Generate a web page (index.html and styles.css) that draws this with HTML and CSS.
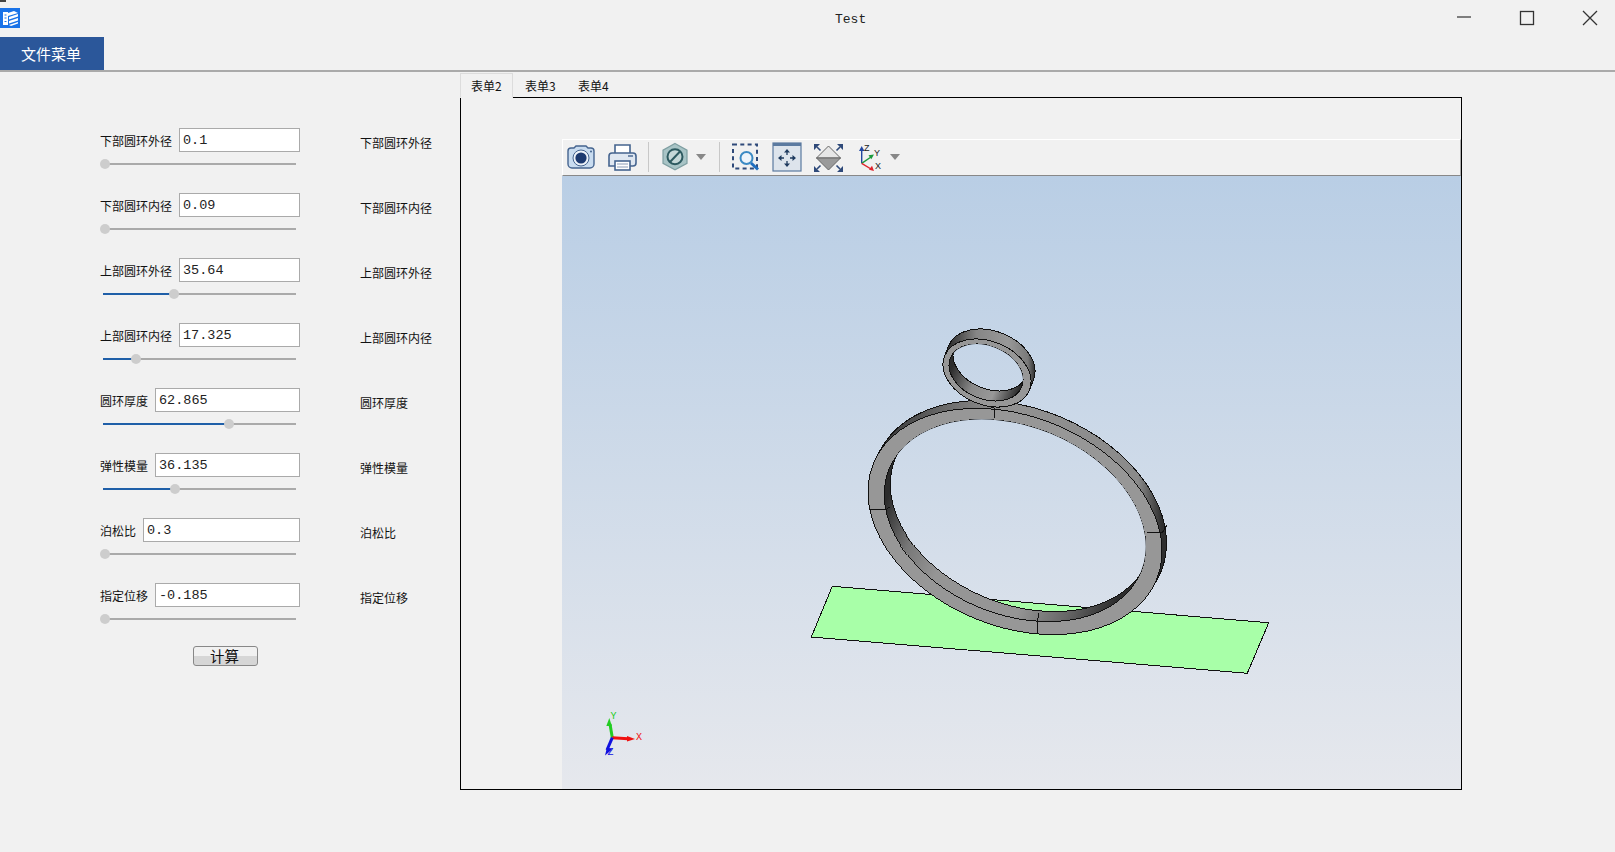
FILE: index.html
```html
<!DOCTYPE html>
<html lang="zh">
<head>
<meta charset="utf-8">
<title>Test</title>
<link rel="stylesheet" href="styles.css">
</head>
<body>
<header class="titlebar">
  <svg class="app-icon" viewBox="0 0 20 20"><rect width="20" height="20" fill="#1a73e8"/><path d="M3 4h5v13H3z" fill="#fff"/><path d="M4.500 7h2M4.500 10h2M4.500 13.500h2" stroke="#1a73e8" stroke-width="1.200"/><path d="M8 5l6-2 4 2-10 3zM9 9l9-3v2.500L9 11.500zM9 13l9-3v2.500L9 15.500zM9 17l9-3v1.500L11 18z" fill="#fff"/></svg>
  <div class="title">Test</div>
  <div class="winctl">
    <svg class="winbtn" viewBox="0 0 16 16"><path d="M1 7h14" stroke="#333" stroke-width="1.200" fill="none"/></svg>
    <svg class="winbtn" viewBox="0 0 16 16"><rect x="1.500" y="1.500" width="13" height="13" stroke="#333" stroke-width="1.300" fill="none"/></svg>
    <svg class="winbtn" viewBox="0 0 16 16"><path d="M1 1l14 14M15 1L1 15" stroke="#333" stroke-width="1.300" fill="none"/></svg>
  </div>
</header>
<nav class="menubar"><div class="menu-btn">文件菜单</div></nav>
<main class="main">
  <section class="params">
    <div class="param"><div class="field"><div class="line"><span class="lbl">下部圆环外径</span><div class="input">0.1</div></div><div class="slider"><div class="fill" style="width:0%"><i class="thumb"></i></div></div></div><div class="side">下部圆环外径</div></div>
    <div class="param"><div class="field"><div class="line"><span class="lbl">下部圆环内径</span><div class="input">0.09</div></div><div class="slider"><div class="fill" style="width:0%"><i class="thumb"></i></div></div></div><div class="side">下部圆环内径</div></div>
    <div class="param"><div class="field"><div class="line"><span class="lbl">上部圆环外径</span><div class="input">35.64</div></div><div class="slider"><div class="fill" style="width:35.64%"><i class="thumb"></i></div></div></div><div class="side">上部圆环外径</div></div>
    <div class="param"><div class="field"><div class="line"><span class="lbl">上部圆环内径</span><div class="input">17.325</div></div><div class="slider"><div class="fill" style="width:16.3%"><i class="thumb"></i></div></div></div><div class="side">上部圆环内径</div></div>
    <div class="param"><div class="field"><div class="line"><span class="lbl">圆环厚度</span><div class="input">62.865</div></div><div class="slider"><div class="fill" style="width:64.3%"><i class="thumb"></i></div></div></div><div class="side">圆环厚度</div></div>
    <div class="param"><div class="field"><div class="line"><span class="lbl">弹性模量</span><div class="input">36.135</div></div><div class="slider"><div class="fill" style="width:36.135%"><i class="thumb"></i></div></div></div><div class="side">弹性模量</div></div>
    <div class="param"><div class="field"><div class="line"><span class="lbl">泊松比</span><div class="input">0.3</div></div><div class="slider"><div class="fill" style="width:0%"><i class="thumb"></i></div></div></div><div class="side">泊松比</div></div>
    <div class="param"><div class="field"><div class="line"><span class="lbl">指定位移</span><div class="input">-0.185</div></div><div class="slider"><div class="fill" style="width:0%"><i class="thumb"></i></div></div></div><div class="side">指定位移</div></div>
    <div class="calc">计算</div>
  </section>
  <section class="workspace">
    <div class="tabs"><div class="tab active">表单2</div><div class="tab">表单3</div><div class="tab">表单4</div></div>
    <div class="pane">
      <div class="viewer">
        <div class="toolbar">
          <svg class="tool" viewBox="0 0 30 30"><path d="M2 9a3 3 0 0 1 3-3h3l2-2h10l2 2h3a3 3 0 0 1 3 3v13a4 4 0 0 1-4 4H6a4 4 0 0 1-4-4z" fill="#c9dcf0" stroke="#45648f" stroke-width="1.400"/><circle cx="15" cy="16" r="8" fill="#eef3f9" stroke="#45648f"/><circle cx="15" cy="16" r="5.600" fill="#1d3a70"/><circle cx="25" cy="9.500" r="1" fill="#45648f"/></svg>
          <svg class="tool tool-gap" viewBox="0 0 30 30"><path d="M8 11V3h15v8" fill="#fff" stroke="#45648f" stroke-width="1.600"/><path d="M2 14a3 3 0 0 1 3-3h21a3 3 0 0 1 3 3v7a3 3 0 0 1-3 3H2z" fill="#dfe7f1" stroke="#45648f" stroke-width="1.600"/><rect x="8" y="19" width="15" height="9" fill="#fff" stroke="#45648f" stroke-width="1.600"/><path d="M10 22h11M10 25h11" stroke="#8b9cb6"/><path d="M21 14h5" stroke="#45648f" stroke-width="1.400"/></svg>
          <span class="sep"></span>
          <svg class="tool" viewBox="0 0 30 30"><path d="M15 1.500l12 6.600v13.200l-12 6.600L3 21.300V8.100z" fill="#a8c4c6" stroke="#7f9fa2" stroke-width="1.200"/><circle cx="15" cy="14.700" r="7.500" fill="#c5d8d8" stroke="#2d5a60" stroke-width="2"/><path d="M10 20l10-10.500" stroke="#2d5a60" stroke-width="2"/></svg>
          <svg class="caret" viewBox="0 0 10 6"><path d="M0 0h10L5 6z" fill="#888"/></svg>
          <span class="sep sep-b"></span>
          <svg class="tool tool-c" viewBox="0 0 30 30"><rect x="3" y="2.500" width="24" height="24" fill="none" stroke="#2f4a7a" stroke-width="2" stroke-dasharray="4 3.300"/><circle cx="16.500" cy="16" r="6" fill="#eef4fa" stroke="#3b8ac4" stroke-width="2"/><path d="M21 21l7 6.500" stroke="#1f6fc0" stroke-width="3"/></svg>
          <svg class="tool tool-gap2" viewBox="0 0 30 30"><rect x="1" y="1" width="28" height="28" fill="#dde4ec" stroke="#5b7aa0" stroke-width="1.200"/><rect x="1" y="1" width="28" height="3" fill="#5b7aa0"/><path d="M15 10v3M15 19v3M9 16h3M18 16h3" stroke="#1e3a5e" stroke-width="1.300"/><path d="M15 7l-3 3.500h6zM15 25l-3-3.500h6zM6 16l3.500-3v6zM24 16l-3.500-3v6z" fill="#1e3a5e"/></svg>
          <svg class="tool tool-fit" viewBox="0 0 36 30"><path d="M17.500 4l12 12h-24z" fill="#e6e6e6" stroke="#666"/><path d="M5.500 16h24l-12 12z" fill="#9a9a9a" stroke="#666"/><path d="M6 5l3.500 3.500M29 5l-3.500 3.500M6 27l3.500-3.500M29 27l-3.500-3.500" stroke="#2f4a7a" stroke-width="1.600"/><path d="M3 2h6L3 8zM32 2h-6l6 6zM3 30h6l-6-6zM32 30h-6l6-6z" fill="#2f4a7a"/></svg>
          <svg class="tool tool-d" viewBox="0 0 30 30"><path d="M6.700 21.300V7" stroke="#2146a0" stroke-width="1.400"/><path d="M6.700 4L4 9h5.400z" fill="#2146a0"/><path d="M6.700 21.300L16 15" stroke="#1c9a3c" stroke-width="1.400"/><path d="M19 12.500l-5.500 .8 2.800 4z" fill="#1c9a3c"/><path d="M6.700 21.300L16 27" stroke="#e0242c" stroke-width="1.400"/><path d="M19 29l-2-5.200-3 4z" fill="#e0242c"/><text class="axis-tx" x="9" y="9">Z</text><text class="axis-tx" x="19" y="14">Y</text><text class="axis-tx" x="20" y="27">X</text></svg>
          <svg class="caret caret-b" viewBox="0 0 10 6"><path d="M0 0h10L5 6z" fill="#888"/></svg>
        </div>
        <svg class="scene" viewBox="562 176 899 613" shape-rendering="crispEdges">
          <defs>
            <linearGradient id="wallBig" gradientUnits="userSpaceOnUse" x1="868" y1="0" x2="1168" y2="0">
              <stop offset="0.03" stop-color="#303030"/><stop offset="0.28" stop-color="#707070"/><stop offset="0.45" stop-color="#929292"/><stop offset="0.9" stop-color="#8a8a8a"/><stop offset="0.98" stop-color="#2e2e2e"/>
            </linearGradient>
            <linearGradient id="innerBig" gradientUnits="userSpaceOnUse" x1="883" y1="0" x2="1147" y2="0">
              <stop offset="0.02" stop-color="#2c2c2c"/><stop offset="0.16" stop-color="#777"/><stop offset="0.3" stop-color="#959595"/><stop offset="0.64" stop-color="#959595"/><stop offset="0.82" stop-color="#666"/><stop offset="0.97" stop-color="#2c2c2c"/>
            </linearGradient>
            <linearGradient id="wallSmall" gradientUnits="userSpaceOnUse" x1="945" y1="0" x2="1035" y2="0">
              <stop offset="0.05" stop-color="#303030"/><stop offset="0.35" stop-color="#868686"/><stop offset="0.7" stop-color="#989898"/><stop offset="0.92" stop-color="#7a7a7a"/><stop offset="1" stop-color="#2e2e2e"/>
            </linearGradient>
            <linearGradient id="innerSmall" gradientUnits="userSpaceOnUse" x1="949" y1="0" x2="1023" y2="0">
              <stop offset="0.05" stop-color="#2c2c2c"/><stop offset="0.4" stop-color="#8a8a8a"/><stop offset="0.7" stop-color="#989898"/><stop offset="1" stop-color="#2c2c2c"/>
            </linearGradient>
            <clipPath id="clipBig"><ellipse cx="1015" cy="520.500" rx="136" ry="94" transform="rotate(22.300 1015 520.500)"/></clipPath>
            <clipPath id="clipSmall"><ellipse cx="986" cy="372.500" rx="38.400" ry="26.500" transform="rotate(22 986 372.500)"/></clipPath>
            <mask id="holeBig" maskUnits="userSpaceOnUse" x="562" y="176" width="899" height="613">
              <rect x="562" y="176" width="899" height="613" fill="#fff"/>
              <g clip-path="url(#clipBig)"><ellipse cx="1021" cy="510.500" rx="136" ry="94" transform="rotate(22.300 1021 510.500)" fill="#000"/></g>
            </mask>
            <mask id="holeSmall" maskUnits="userSpaceOnUse" x="562" y="176" width="899" height="613">
              <rect x="562" y="176" width="899" height="613" fill="#fff"/>
              <g clip-path="url(#clipSmall)"><ellipse cx="990" cy="362.500" rx="38.400" ry="26.500" transform="rotate(22 990 362.500)" fill="#000"/></g>
            </mask>
          </defs>
          <polygon points="832.300,586.300 1268.700,622.700 1247.300,673.300 811.300,637" fill="#a8ffa8" stroke="#111"/>
          <g mask="url(#holeBig)" stroke="#111">
            <path d="M1151.600 588.800A153 105 22.300 0 1 878.400 453.200L884.400 443.200A153 105 22.300 0 1 1157.600 578.800Z" fill="url(#wallBig)"/>
            <ellipse cx="1015" cy="521.500" rx="153" ry="105" transform="rotate(22.300 1015 521.500)" fill="#979797"/>
            <ellipse cx="1015" cy="520.500" rx="136" ry="94" transform="rotate(22.300 1015 520.500)" fill="url(#innerBig)"/>
          </g>
          <g clip-path="url(#clipBig)"><ellipse cx="1021" cy="510.500" rx="136" ry="94" transform="rotate(22.300 1021 510.500)" fill="none" stroke="#111"/></g>
          <path d="M994 408l1 10M988 406l6 2M870 509l15 1M885 510l5-3M1147 532l15 1M1162 533l5-8M1037 623v11M1037 623l2-10" stroke="#111" fill="none"/>
          <g mask="url(#holeSmall)" stroke="#111">
            <path d="M1029.400 390.100A45.700 31.700 22 0 1 944.600 355.900L948.600 345.900A45.700 31.700 22 0 1 1033.400 380.100Z" fill="url(#wallSmall)"/>
            <ellipse cx="987" cy="373" rx="45.700" ry="31.700" transform="rotate(22 987 373)" fill="#979797"/>
            <ellipse cx="986" cy="372.500" rx="38.400" ry="26.500" transform="rotate(22 986 372.500)" fill="url(#innerSmall)"/>
          </g>
          <g clip-path="url(#clipSmall)"><ellipse cx="990" cy="362.500" rx="38.400" ry="26.500" transform="rotate(22 990 362.500)" fill="none" stroke="#111"/></g>
          <g shape-rendering="geometricPrecision">
            <path d="M612.300 737.700L610 724" stroke="#22cc22" stroke-width="3"/><path d="M609.300 718l-3 8h5.500z" fill="#22cc22"/>
            <path d="M612.300 737.700L628 738.700" stroke="#f01010" stroke-width="3"/><path d="M635 739l-8-3v5.600z" fill="#f01010"/>
            <path d="M612.300 737.700L607 750" stroke="#1010e0" stroke-width="3"/><path d="M605 755.500l7-6-5-2.200z" fill="#1010e0"/>
            <text class="triad triad-y" x="610.500" y="719">Y</text>
            <text class="triad triad-x" x="636" y="740">X</text>
            <text class="triad triad-z" x="607.500" y="754.500">Z</text>
          </g>
        </svg>
      </div>
    </div>
  </section>
</main>
</body>
</html>
```
FILE: styles.css
```css
* { box-sizing: border-box; }
html, body { margin: 0; padding: 0; }
body {
  width: 1615px;
  height: 852px;
  overflow: hidden;
  background: #f1f1f1;
  color: #111;
  font-family: "Noto Sans CJK SC", "Liberation Sans", sans-serif;
  font-size: 12px;
}
.titlebar { position: relative; height: 37px; display: flex; align-items: flex-start; }
.titlebar::before {
  content: "";
  position: absolute;
  left: 0;
  top: 0;
  width: 6px;
  height: 2px;
  background: #444;
}
.app-icon { width: 20px; height: 20px; margin-top: 8px; flex: none; }
.title {
  margin-left: 815px;
  margin-top: 12px;
  font-family: "Liberation Mono", monospace;
  font-size: 13px;
  line-height: 15px;
  color: #222;
}
.winctl { margin-left: auto; display: flex; gap: 47px; margin-top: 10px; margin-right: 17px; }
.winbtn { width: 16px; height: 16px; display: block; }
.menubar { height: 35px; border-bottom: 2px solid #aaa; }
.menu-btn {
  width: 104px;
  height: 33px;
  padding-right: 2px;
  background: #2b579a;
  color: #fff;
  font-size: 15px;
  line-height: 33px;
  text-align: center;
}
.main { display: flex; padding-top: 1px; }
.params { width: 460px; padding: 55px 0 0 100px; flex: none; }
.param { display: flex; height: 65px; }
.field { width: 200px; flex: none; }
.line { display: flex; align-items: center; gap: 7px; height: 24px; }
.lbl { white-space: nowrap; line-height: 16px; margin-top: 1px; }
.input {
  flex: 1;
  height: 24px;
  background: #fff;
  border: 1px solid #aaa;
  padding: 1px 0 0 3px;
  font-family: "Liberation Mono", monospace;
  font-size: 13.5px;
  line-height: 22px;
  color: #222;
}
.slider {
  position: relative;
  height: 2px;
  margin: 11px 4px 0 3px;
  background: #aaa;
}
.fill { position: relative; height: 2px; background: #1f5fa8; max-width: 100%; }
.thumb {
  position: absolute;
  right: -7px;
  top: -4px;
  width: 10px;
  height: 10px;
  border-radius: 50%;
  background: #cdcdcd;
}
.side { margin-left: 60px; margin-top: 7px; line-height: 16px; white-space: nowrap; }
.calc {
  width: 65px;
  height: 20px;
  margin: -2px 0 0 93px;
  padding-right: 2px;
  border: 1px solid #888;
  border-radius: 3px;
  background: linear-gradient(#f1f1f1 50%, #d6d6d6 50%);
  font-size: 14.5px;
  line-height: 18px;
  text-align: center;
}
.workspace { width: 1002px; flex: none; }
.tabs { display: flex; height: 24px; }
.tab { width: 53px; height: 24px; line-height: 26px; padding-left: 12px; }
.tab.active {
  position: relative;
  z-index: 1;
  height: 25px;
  border: 1px solid #dcdcdc;
  border-bottom-color: #f1f1f1;
  background: #f1f1f1;
  padding-left: 10px;
  line-height: 24px;
}
.pane { height: 693px; border: 1px solid #000; padding: 41px 0 0 101px; }
.viewer { height: 650px; display: flex; flex-direction: column; }
.toolbar {
  height: 37px;
  flex: none;
  display: flex;
  align-items: center;
  padding: 0 0 2px 3px;
  background: #f1f1f1;
  border-top: 1px solid #fff;
  border-left: 1px solid #fff;
  border-bottom: 1px solid #888;
  border-right: 1px solid #aaa;
}
.tool { width: 30px; height: 30px; flex: none; }
.tool-gap { margin-left: 11px; }
.tool-gap2 { margin-left: 12px; }
.tool-c { margin-left: 10px; }
.tool-fit { width: 36px; margin-left: 9px; }
.tool-d { margin-left: 8px; }
.sep { width: 1px; height: 30px; background: #c8c8c8; margin: 0 11px; flex: none; }
.sep-b { margin: 0 0 0 13px; }
.caret { width: 10px; height: 6px; margin-left: 6px; flex: none; }
.caret-b { margin-left: 5px; }
.axis-tx { font-family: "Liberation Sans", sans-serif; font-size: 9px; fill: #222; }
.scene {
  flex: 1;
  display: block;
  width: 899px;
  background: linear-gradient(#b9cee5, #e6e8ed);
}
.triad { font-family: "Liberation Mono", monospace; font-size: 10px; }
.triad-y { fill: #22cc22; }
.triad-x { fill: #f01010; }
.triad-z { fill: #1010e0; }
```
